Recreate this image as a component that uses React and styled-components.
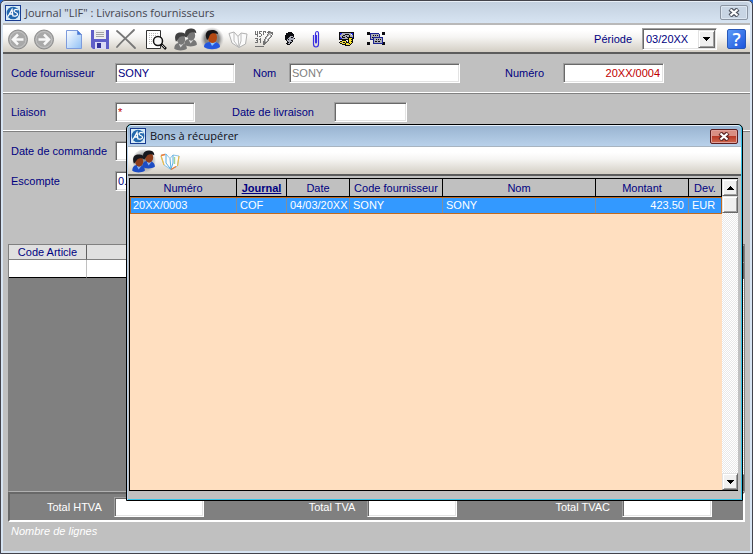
import React from "react";
import styled, { createGlobalStyle, css } from "styled-components";

const GlobalStyle = createGlobalStyle`
  * { box-sizing: border-box; }
  html, body, #root { height: 100%; margin: 0; }
  body { background: #2a6ad0; font: 11px/14px "Liberation Sans", Arial, sans-serif; color: #000080; overflow: hidden; }
  button, input, select { font: inherit; color: inherit; }
`;

const sunken = css`
  border: 1px solid;
  border-color: #a0a0a0 #fff #fff #a0a0a0;
  box-shadow: inset 1px 1px #696969, inset -1px -1px #e3e3e3;
`;
const raised = css`
  border: 1px solid;
  border-color: #e3e3e3 #696969 #696969 #e3e3e3;
  box-shadow: inset 1px 1px #fff, inset -1px -1px #a0a0a0;
  background: #f0f0f0;
`;

const Window = styled.main`
  position: relative;
  height: 100vh;
  display: flex;
  flex-direction: column;
  border: 1px solid #43434b;
  border-radius: 5px 5px 0 0;
  padding: 0 2px 2px;
  background: #d7e4f2;
`;
const TitleBar = styled.header`
  display: flex;
  align-items: center;
  flex: none;
  gap: 4px;
  height: ${(p) => (p.$active ? 22 : 24)}px;
  padding: 0 ${(p) => (p.$active ? 3 : 2)}px 0 2px;
  background: ${(p) => (p.$active ? "linear-gradient(#99b4d1, #b9d1ea)" : "linear-gradient(#c3d0df, #d7e4f2)")};
  border-top: 1px solid ${(p) => (p.$active ? "#e6f0fa" : "#e8eff7")};
  border-bottom: ${(p) => (p.$active ? "1px solid #a8b4c0" : "2px solid #b9b9b9")};
  border-radius: 4px 4px 0 0;
`;
const Title = styled.h1`
  flex: 1;
  margin: 0;
  font: 400 11px/16px "Open Sans", "Noto Sans", sans-serif;
  color: ${(p) => (p.$active ? "#101018" : "#45454f")};
`;
const CloseButton = styled.button`
  display: grid;
  place-items: center;
  width: 28px;
  height: 15px;
  padding: 0;
  border: 1px solid ${(p) => (p.$active ? "#5a1d20" : "#8b95a3")};
  border-radius: 2px;
  box-shadow: inset 0 0 0 1px ${(p) => (p.$active ? "#e0a09a" : "#dce6f1")};
  background: ${(p) => (p.$active ? "linear-gradient(#d98e83 45%, #b83a28 50%, #cf6a50)" : "#c8d5e4")};
`;
const Toolbar = styled.div`
  display: flex;
  align-items: center;
  flex: none;
  gap: 4px;
  height: 29px;
  padding: 0 4px 0 ${(p) => p.$start}px;
  background: linear-gradient(#fff 20%, #f6f5f3 45%, #d3cec4);
  border-bottom: 2px solid #5c5c5c;
`;
const ToolGroup = styled.div`
  display: flex;
`;
const ToolButton = styled.button`
  display: grid;
  place-items: center;
  width: 26px;
  height: 26px;
  padding: 0;
  border: 0;
  background: none;
`;
const Period = styled.label`
  display: flex;
  align-items: center;
  gap: 10px;
  margin-left: auto;
  margin-right: 6px;
`;
const SelectBox = styled.span`
  ${sunken}
  display: flex;
  align-items: center;
  width: 75px;
  height: 22px;
  padding: 2px 1px 2px 2px;
  background: #fff;
`;
const Select = styled.select`
  appearance: none;
  flex: 1;
  min-width: 0;
  height: 16px;
  padding: 0 1px;
  border: 0;
  background: none;
`;
const Arrow = styled.span`
  ${raised}
  display: grid;
  place-items: center;
  width: 17px;
  height: 18px;
`;
const HelpButton = styled.button`
  display: grid;
  place-items: center;
  width: 19px;
  height: 20px;
  padding: 0;
  border: 1px solid #2858b8;
  border-radius: 2px;
  background: linear-gradient(135deg, #5d9bf8, #1d55dc);
  color: #fff;
  font: 600 18px/18px "Open Sans", sans-serif;
`;
const Content = styled.div`
  display: flex;
  flex-direction: column;
  flex: 1;
  min-height: 0;
  background: #c0c0c0;
`;
const FieldRow = styled.div`
  display: flex;
  align-items: center;
  flex: none;
  height: ${(p) => p.$height}px;
  padding: 0 86px 1px 8px;
  border-bottom: 1px solid #808080;
  box-shadow: inset 0 -1px #fff;
`;
const Details = styled.div`
  display: grid;
  flex: none;
  align-content: start;
  gap: 10px;
  height: 112px;
  padding: 9px 8px 0;
`;
const Field = styled.label`
  display: flex;
  align-items: center;
  margin-left: ${(p) => (p.$push ? "auto" : `${p.$before || 0}px`)};
`;
const FieldName = styled.span`
  width: ${(p) => p.$width}px;
`;
const TextBox = styled.input`
  ${sunken}
  width: ${(p) => p.$width}px;
  height: 20px;
  padding: 0 3px 1px 2px;
  border-radius: 0;
  outline: 0;
  background: #fff;
  color: ${(p) => p.$color || "#000080"};
  text-align: ${(p) => p.$align || "left"};
`;
const Articles = styled.section`
  display: flex;
  flex: 1;
  min-height: 0;
  margin: 0 5px;
  background: #808080;
  border: 1px solid #808080;
  border-bottom-color: #b0b0b0;
`;
const ArticleTable = styled.table`
  flex: 1;
  align-self: flex-start;
  table-layout: fixed;
  border-collapse: separate;
  border-spacing: 0;
  background: #fff;
  th { height: 15px; padding: 0; font-weight: 400; background: #e0e0e0; border-right: 1px solid #606060; border-bottom: 1px solid #808080; }
  td { height: 18px; padding: 0; border-right: 1px solid #c0c0c0; border-bottom: 1px solid #000; }
`;
const Totals = styled.section`
  display: grid;
  grid-template-columns: 194fr 254fr 255fr;
  flex: none;
  height: 30px;
  margin: 0 5px;
  padding: 3px 31px 0 0;
  border: 2px solid;
  border-color: #686868 #fff #fff #686868;
  background: #808080;
`;
const TotalField = styled.label`
  display: flex;
  align-items: center;
  justify-content: flex-end;
  gap: 12px;
  height: 20px;
  color: #fff;
`;
const Status = styled.footer`
  flex: none;
  height: 29px;
  padding: 2px 8px;
  color: #fff;
  font-style: italic;
`;

const Dialog = styled.section`
  position: absolute;
  inset: 123px 9px 52px 125px;
  display: flex;
  flex-direction: column;
  border: 1px solid #000;
  border-radius: 5px 5px 0 0;
  padding: 0 1px 1px;
  background: linear-gradient(#b9d1ea, #b9d1ea) left / 1px 100% no-repeat, #35c4e8;
`;
const DialogBody = styled.div`
  display: flex;
  flex: 1;
  min-height: 0;
  padding: 2px 3px 8px 1px;
  background: #c0c0c0;
`;
const Grid = styled.div`
  flex: 1;
  min-width: 0;
  border: solid #000;
  border-width: 1px 0 1px 1px;
  background: #ffdfc0;
`;
const GridTable = styled.table`
  width: 100%;
  table-layout: fixed;
  border-collapse: separate;
  border-spacing: 0;
`;
const HeadCell = styled.th`
  height: 18px;
  padding: 0;
  background: #c0c0c0;
  border-right: 1px solid #000;
  border-bottom: 1px solid #000;
  font-weight: ${(p) => (p.$sorted ? 700 : 400)};
  text-decoration: ${(p) => (p.$sorted ? "underline" : "none")};
`;
const Row = styled.tr`
  background: #3399ff;
  color: #fff;
`;
const Cell = styled.td`
  height: 17px;
  padding: 0 ${(p) => (p.$align === "right" ? 5 : 3)}px 1px 3px;
  border: 0 solid #c06a20;
  border-width: 1px 0;
  box-shadow: inset -1px 0 #8090a0;
  text-align: ${(p) => p.$align || "left"};
  white-space: nowrap;
  line-height: 13px;
  &:first-child { border-left-width: 1px; padding-left: 2px; }
  &:last-child { border-right-width: 1px; box-shadow: none; }
`;
const ScrollBar = styled.div`
  display: flex;
  flex-direction: column;
  flex: none;
  width: 16px;
  border: solid #000;
  border-width: ${(p) => (p.$framed ? 1 : 0)}px 0;
  background: repeating-conic-gradient(#fff 0 25%, #e8e8e8 0 50%) 0 0 / 2px 2px;
`;
const ScrollButton = styled.button`
  ${raised}
  display: grid;
  place-items: center;
  width: 16px;
  height: 17px;
  padding: 0;
`;
const ScrollThumb = styled.div`
  ${raised}
  height: 17px;
  margin-bottom: auto;
`;

function Icon({ size = 24, children, ...rest }) {
  return (
    <svg width={size} height={size} viewBox={`0 0 ${size} ${size}`} fill="none" aria-hidden="true" {...rest}>
      {children}
    </svg>
  );
}

const inks = { "#": "#0c0c10", g: "#a9abb8", b: "#1a22e0", n: "#1c2490", y: "#f5e22a", w: "#ffffff", d: "#727272", l: "#b4b4b4" };

function PixelIcon({ rows }) {
  const width = Math.max(...rows.map((r) => r.length));
  const runs = [];
  rows.forEach((row, y) => {
    for (const m of row.matchAll(/([^.])\1*/g)) {
      runs.push(<rect key={`${y}-${m.index}`} x={m.index} y={y} width={m[0].length} height="1" fill={inks[m[1]]} />);
    }
  });
  return (
    <svg width={width} height={rows.length} viewBox={`0 0 ${width} ${rows.length}`} shapeRendering="crispEdges" aria-hidden="true">
      {runs}
    </svg>
  );
}

const profileRows = [
  "...####...",
  ".#######..",
  ".########.",
  "#########.",
  "#####ggg#.",
  "####gg##g.",
  "###gggggg#",
  "##g#ggggg.",
  ".#gggg##..",
  "..#gggg#..",
  "..##g##...",
  ".##gg#....",
  "..###.....",
];
const moneyRows = [
  "###############",
  "#bbgggggggggbb#",
  "#bgggg####ggwb#",
  "#ggg##gggg#ggg#",
  "#gg#ggg#gg#ggg#",
  "#bg###gg#####b#",
  "#bbgggggg#yyy##",
  "##########yy##.",
  "...####..#yyy#.",
  ".##yyyy#.#yy##.",
  "#yyg##y###yyy#.",
  ".##yyy#yyg#y#..",
  "...####yyyy#...",
  "......#####....",
];
const linkRows = [
  "###............###",
  "###nnnnnnnnn...###",
  "###nggggggggn..###",
  "...ngg#g#g#gn.....",
  "...nggggggggn.....",
  "...ng#nnnnnnnnnn..",
  "...nggnggggggggn..",
  "...nnnngg#g#g#gn..",
  "......nggggggggn..",
  "......ng##g##ggn..",
  "###...nggggggggn##",
  "###...nnnnnnnnnn##",
  "###............###",
];
const entryRows = [
  "d.d.ddd.ddd..ddl..",
  "d.d.d...d.d.dddddd",
  "d.d.dd..d....dlldd",
  "ddd...d.d...dlllwd",
  "..d...d.....dlwld.",
  "..d.dd.....dlwwld.",
  "..........dlwwld..",
  "ddd..d....dlwld...",
  "..d.dd...dlwld....",
  ".dd..d...dlwld....",
  "..d..d..ddlld.....",
  "ddd..d..dddd......",
  "........ddd.......",
  "........dd........",
  "..................",
  "ddddddddd.........",
];

const Logo = () => (
  <Icon size={16}>
    <rect x=".5" y=".5" width="15" height="15" fill="#d8ecf8" stroke="#183b90" />
    <circle cx="8" cy="8" r="6.3" fill="#2368ad" />
    <path d="M3 11.500 7 4.500l1 7M4.500 9H8M13 5c-2-1-4-.5-4 1s3.500 1.500 3.500 3.200S10 11.500 8.500 10.800" stroke="#fff" strokeWidth="1.300" />
  </Icon>
);
const CloseMark = ({ active }) => (
  <svg width="12" height="9" viewBox="0 0 12 9" fill="none" aria-hidden="true">
    <path d="m2 1 8 7m0-7-8 7" stroke={active ? "#5d2524" : "#4f5561"} strokeWidth="4.500" />
    <path d="m2.500 1.500 7 6m0-6-7 6" stroke="#fff" strokeWidth="2.200" />
  </svg>
);
const Triangle = ({ up }) => (
  <svg width="7" height="4" viewBox="0 0 7 4" shapeRendering="crispEdges" aria-hidden="true">
    <path d={up ? "M3 0h1v1h1v1h1v1h1v1H0V3h1V2h1V1h1z" : "M0 0h7v1H6v1H5v1H4v1H3V3H2V2H1V1H0z"} fill="#000" />
  </svg>
);
const Nav = ({ right }) => (
  <Icon>
    <circle cx="12" cy="12.500" r="9.500" fill="#a9a9a9" stroke="#8d8d8d" />
    <circle cx="12" cy="12.500" r="8" stroke="#c3c3c3" />
    <path d={right ? "M6.500 12.500H16M12 7.500l5 5-5 5" : "M17.500 12.500H8M12 7.500l-5 5 5 5"} stroke="#f8f8f8" strokeWidth="2.500" />
  </Icon>
);
const PageIcon = () => (
  <Icon>
    <defs><linearGradient id="page" x2="1" y2="1"><stop stopColor="#fff" /><stop offset="1" stopColor="#8fc0f6" /></linearGradient></defs>
    <path d="M4.500 3.500h11l4 4v14h-15z" fill="url(#page)" stroke="#7d9bdc" />
    <path d="M15.500 3.500v4h4z" fill="#3f7de0" stroke="#6d8fd8" />
  </Icon>
);
const SaveIcon = () => (
  <Icon>
    <path d="M3 3h18v19H5l-2-2z" fill="#5f5fc8" />
    <path d="M6 3h12v9H6z" fill="#eee" />
    <path d="M8 5.500h8M8 7.500h8M8 9.500h8" stroke="#a4a4a4" />
    <path d="M7 15h11v7H7z" fill="#dadaf5" />
    <path d="M9 16h4v5H9z" fill="#33339a" />
  </Icon>
);
const DeleteIcon = () => (
  <Icon>
    <path d="M3 4c5 4 12 11 18 17M20 3C15 8 8 14 3 20" stroke="#777" strokeWidth="1.800" strokeLinecap="round" />
  </Icon>
);
const PreviewIcon = () => (
  <Icon>
    <path d="M2.500 3.500h14v18h-14z" fill="#fff" stroke="#333" />
    <path d="M5 6.500h9M5 8.500h7M5 10.500h4M5 12.500h3M5 14.500h3M5 16.500h4" stroke="#bbb" strokeDasharray="1 1" />
    <circle cx="14" cy="14" r="4.500" fill="#f7f7f7" stroke="#111" strokeWidth="1.500" />
    <path d="m17 17 5 5" stroke="#111" strokeWidth="2.500" />
    <path d="m18 18 3 3" stroke="#bbb" />
  </Icon>
);
function Person({ x, y, head, hair, body, tie }) {
  return (
    <g transform={`translate(${x} ${y}) scale(1.15)`}>
      <path d="M-5 11c0-4 2-5 5-5s6 1 6 5c-3 2-8 2-11 0" fill={body} />
      <path d="m-1 7 1.500 3L3 7" fill={tie} />
      <ellipse cx="1" cy="3" rx="3.500" ry="4.500" fill={head} />
      <path d="M-3.500 5c-2-5 0-8 4-8 3 0 5 1 5 4-3-1-4-1-6 0-1 1-1 2-3 4" fill={hair} />
    </g>
  );
}
const PeopleIcon = ({ color }) => {
  const look = color
    ? { head: "#8e3d1c", hair: "#17171d", body: "#1c4cc4", tie: "#8cb4f0" }
    : { head: "#777", hair: "#404040", body: "#777", tie: "#d8d8d8" };
  return (
    <Icon>
      <defs><radialGradient id="crowd"><stop offset=".5" stopColor="#8a8a8a" /><stop offset="1" stopColor="#b5b5b5" stopOpacity=".3" /></radialGradient></defs>
      {color && <circle cx="12" cy="12" r="11.500" fill="url(#crowd)" />}
      <Person x={16} y={5} {...look} />
      <Person x={6} y={9} {...look} />
    </Icon>
  );
};
const UserIcon = () => (
  <Icon>
    <defs><radialGradient id="glow"><stop offset=".6" stopColor="#858585" /><stop offset="1" stopColor="#bbb" stopOpacity="0" /></radialGradient></defs>
    <circle cx="12" cy="12" r="12" fill="url(#glow)" />
    <path d="M4 20c0-4 3-5 8-5s8 1 8 5c-4 3-12 3-16 0" fill="#2457de" />
    <path d="m10 15 2 4 4-4" fill="#8cc7ff" />
    <ellipse cx="12.500" cy="10.500" rx="4.500" ry="5.500" fill="#b34813" />
    <path d="M7 13C4 6 7 3 12 3c4 0 6 2 6 4-4-1-7-1-8 1-1 1-1 4-3 5" fill="#171417" />
  </Icon>
);
const BookIcon = ({ color }) => (
  <Icon>
    <path d="M3 6.500 8 5l4 4.500L15 6l6 1-1.500 10-6.500 3.500L6 16z" fill="#fbfbfb" stroke={color ? "#8cc4e6" : "#b0b0b0"} />
    <path d="M8 5v9l5 6.500M12 9.500l1 11M15 6v8l-2 6" stroke={color ? "#58aee4" : "#bcbcbc"} />
    {color && <path d="m3 6.500 4-1M13 20.500l5-3" stroke="#ee7c38" strokeWidth="1.400" />}
    {color && <path d="m3 7 3 9M21 7l-1.500 10" stroke="#eebb48" strokeWidth="1.200" />}
    {color && <path d="M16.500 8v7" stroke="#a4d69a" strokeWidth="1.400" />}
  </Icon>
);
const ClipIcon = () => (
  <Icon>
    <path d="M9.500 8v9q0 3 2.500 3t2.500-3V6.500q0-2-1.500-2T11.500 6.500V15q0 1 .5 1t.5-1V8" stroke="#3a2fe0" strokeWidth="1.200" />
  </Icon>
);

const toolGroups = [
  [["Précédent", <Nav key="i" />], ["Suivant", <Nav key="i" right />]],
  [["Nouveau", <PageIcon key="i" />], ["Enregistrer", <SaveIcon key="i" />], ["Supprimer", <DeleteIcon key="i" />]],
  [["Aperçu", <PreviewIcon key="i" />]],
  [
    ["Fournisseurs", <PeopleIcon key="i" />],
    ["Fournisseur", <UserIcon key="i" />],
    ["Catalogue", <BookIcon key="i" />],
    ["Encodage", <PixelIcon key="i" rows={entryRows} />],
    ["Profil", <PixelIcon key="i" rows={profileRows} />],
    ["Pièce jointe", <ClipIcon key="i" />],
  ],
  [["Paiement", <PixelIcon key="i" rows={moneyRows} />]],
  [["Liaisons", <PixelIcon key="i" rows={linkRows} />]],
];
const columns = [
  { name: "Numéro", width: 107, value: "20XX/0003" },
  { name: "Journal", width: 50, value: "COF", sorted: true },
  { name: "Date", width: 63, value: "04/03/20XX" },
  { name: "Code fournisseur", width: 93, value: "SONY" },
  { name: "Nom", value: "SONY" },
  { name: "Montant", width: 93, value: "423.50", align: "right" },
  { name: "Dev.", width: 33, value: "EUR" },
];

function LabeledBox({ name, labelWidth, before, push, ...box }) {
  return (
    <Field $before={before} $push={push}>
      <FieldName $width={labelWidth}>{name}</FieldName>
      <TextBox {...box} />
    </Field>
  );
}

function Scroller({ framed }) {
  return (
    <ScrollBar $framed={framed}>
      <ScrollButton aria-label="Monter"><Triangle up /></ScrollButton>
      <ScrollThumb />
      <ScrollButton aria-label="Descendre"><Triangle /></ScrollButton>
    </ScrollBar>
  );
}

function RecoverDialog() {
  return (
    <Dialog role="dialog" aria-labelledby="recover-title">
      <TitleBar $active>
        <Logo />
        <Title as="h2" id="recover-title" $active>Bons à récupérer</Title>
        <CloseButton $active aria-label="Fermer"><CloseMark active /></CloseButton>
      </TitleBar>
      <Toolbar $start={3}>
        <ToolGroup>
          <ToolButton aria-label="Tous les fournisseurs"><PeopleIcon color /></ToolButton>
          <ToolButton aria-label="Consulter"><BookIcon color /></ToolButton>
        </ToolGroup>
      </Toolbar>
      <DialogBody>
        <Grid>
          <GridTable>
            <colgroup>{columns.map((c) => <col key={c.name} width={c.width} />)}</colgroup>
            <thead>
              <tr>{columns.map((c) => <HeadCell key={c.name} $sorted={c.sorted}>{c.name}</HeadCell>)}</tr>
            </thead>
            <tbody>
              <Row>{columns.map((c) => <Cell key={c.name} $align={c.align}>{c.value}</Cell>)}</Row>
            </tbody>
          </GridTable>
        </Grid>
        <Scroller framed />
      </DialogBody>
    </Dialog>
  );
}

export default function App() {
  return (
    <>
      <GlobalStyle />
      <Window>
        <TitleBar>
          <Logo />
          <Title>Journal "LIF" : Livraisons fournisseurs</Title>
          <CloseButton aria-label="Fermer"><CloseMark /></CloseButton>
        </TitleBar>
        <Toolbar $start={2}>
          {toolGroups.map((group) => (
            <ToolGroup key={group[0][0]}>
              {group.map(([name, icon]) => <ToolButton key={name} aria-label={name}>{icon}</ToolButton>)}
            </ToolGroup>
          ))}
          <Period>
            Période
            <SelectBox>
              <Select defaultValue="03/20XX"><option>03/20XX</option></Select>
              <Arrow><Triangle /></Arrow>
            </SelectBox>
          </Period>
          <HelpButton aria-label="Aide">?</HelpButton>
        </Toolbar>
        <Content>
          <FieldRow $height={40}>
            <LabeledBox name="Code fournisseur" labelWidth={104} $width={120} defaultValue="SONY" />
            <LabeledBox name="Nom" labelWidth={36} before={18} $width={171} $color="#808080" defaultValue="SONY" readOnly />
            <LabeledBox name="Numéro" labelWidth={58} push $width={101} $color="#c00000" $align="right" defaultValue="20XX/0004" />
          </FieldRow>
          <FieldRow $height={38}>
            <LabeledBox name="Liaison" labelWidth={104} $width={80} $color="#c00000" defaultValue="*" />
            <LabeledBox name="Date de livraison" labelWidth={102} before={37} $width={73} />
          </FieldRow>
          <Details>
            <LabeledBox name="Date de commande" labelWidth={104} $width={80} />
            <LabeledBox name="Escompte" labelWidth={104} $width={80} defaultValue="0.00" />
          </Details>
          <Articles>
            <ArticleTable>
              <colgroup><col width="78" /><col /></colgroup>
              <thead><tr><th>Code Article</th><th aria-label="Libellé" /></tr></thead>
              <tbody><tr><td /><td /></tr></tbody>
            </ArticleTable>
            <Scroller />
          </Articles>
          <Totals>
            {["Total HTVA", "Total TVA", "Total TVAC"].map((name) => (
              <TotalField key={name}>{name}<TextBox $width={90} /></TotalField>
            ))}
          </Totals>
          <Status>Nombre de lignes</Status>
        </Content>
        <RecoverDialog />
      </Window>
    </>
  );
}
